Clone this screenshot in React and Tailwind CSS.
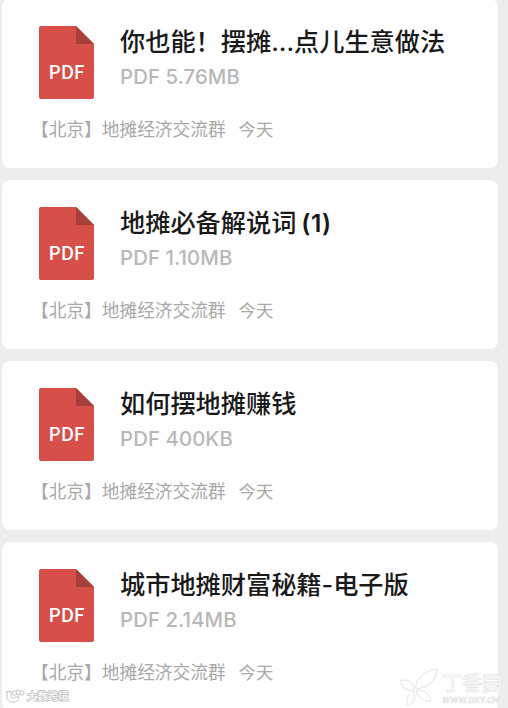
const files = [
  { title: "你也能！摆摊...点儿生意做法", size: "5.76MB" },
  { title: "地摊必备解说词", suffix: "(1)", size: "1.10MB" },
  { title: "如何摆地摊赚钱", size: "400KB" },
  { title: "城市地摊财富秘籍-电子版", size: "2.14MB" },
];

function PdfIcon() {
  return (
    <svg viewBox="0 0 55 73" className="w-[55px] h-[73px] shrink-0">
      <path d="M2 0H37L55 18V71a2 2 0 0 1-2 2H2a2 2 0 0 1-2-2V2a2 2 0 0 1 2-2Z" fill="#d64f49" />
      <path d="M37 0L55 18H37Z" fill="#a63e3a" />
      <text x="27.5" y="52.8" textAnchor="middle" textLength="36" fontSize="19" fontWeight="500" fill="#fff" fontFamily="'Noto Sans CJK SC', sans-serif">PDF</text>
    </svg>
  );
}

function FileCard({ file }) {
  return (
    <div className="h-[169px] w-[496px] shrink-0 rounded-[8px] bg-[#fefefe] pl-[37px] pt-[27px]">
      <div className="flex gap-[26px]">
        <PdfIcon />
        <div className="whitespace-nowrap">
          <div className="h-[32px] text-[25.2px] leading-[32px] font-medium text-[#191919]">
            {file.title}
            {file.suffix && <span className="ml-[5px] text-[24.5px] font-semibold tracking-[0.5px]">{file.suffix}</span>}
          </div>
          <div className="mt-[6px] text-[20.3px] leading-[26px] font-medium tracking-[0.12px] text-[#b8b8b8]">PDF {file.size}</div>
        </div>
      </div>
      <div className="mt-[18px] flex gap-[13px] text-[17.7px] leading-[26px] text-[#a8a8a8]">
        <span className="-ml-[8px]">【北京】地摊经济交流群</span>
        <span className="text-[17.4px]">今天</span>
      </div>
    </div>
  );
}

function SiteMark() {
  return (
    <div className="absolute left-[400px] top-[668px] flex">
      <svg viewBox="0 0 40 40" className="w-[40px] h-[40px]" fill="none" stroke="#e4e4e4" strokeWidth="1">
        <path d="M16 21C15 11 24 3 37 1C37 11 30 19 16 21Z" />
        <path d="M14 22C6 23 1 19 1 12C9 12 14 15 14 22Z" />
        <path d="M16 23C23 21 31 26 31 33C24 34 18 30 16 23Z" />
        <path d="M14 23C8 26 6 31 7 38C13 36 16 31 14 23Z" />
      </svg>
      <div className="pl-[2px] pt-[6px] whitespace-nowrap">
        <div className="text-[20px] leading-[21px] font-medium text-[#fbfbfb] [-webkit-text-stroke:0.6px_#e4e4e4]">丁香园</div>
        <div className="text-[7.8px] leading-[10px] font-bold italic text-[#f8f8f8] [-webkit-text-stroke:0.5px_#e0e0e0]">WWW.DXY.CN</div>
      </div>
    </div>
  );
}

function SourceMark() {
  return (
    <div className="absolute left-[6px] top-[689px] flex items-center gap-[2px]">
      <svg viewBox="0 0 19 15" className="w-[19px] h-[15px]" fill="#fff" stroke="#c2c2c2" strokeWidth="1">
        <path d="M3 2.5H1V7C1 11 3 13 7 13S13 11 13 8H9C8 10 5 10 5 7V2.5Z" />
        <circle cx="8.5" cy="4" r="2.2" />
        <circle cx="12.5" cy="3.5" r="2.4" />
        <circle cx="16" cy="4" r="2.1" />
      </svg>
      <span className="whitespace-nowrap text-[10.4px] leading-[15px] font-medium text-white [-webkit-text-stroke:1.5px_#bcbcbc] [paint-order:stroke_fill]">大数跨境</span>
    </div>
  );
}

export default function App() {
  return (
    <div className="relative h-[708px] w-[508px] overflow-hidden bg-[#ededed] font-[Inter,'Noto_Sans_CJK_SC',sans-serif]">
      <div className="-mt-px flex flex-col gap-[12px] pl-[2px]">
        {files.map((file) => (
          <FileCard key={file.title} file={file} />
        ))}
      </div>
      <SiteMark />
      <SourceMark />
    </div>
  );
}
